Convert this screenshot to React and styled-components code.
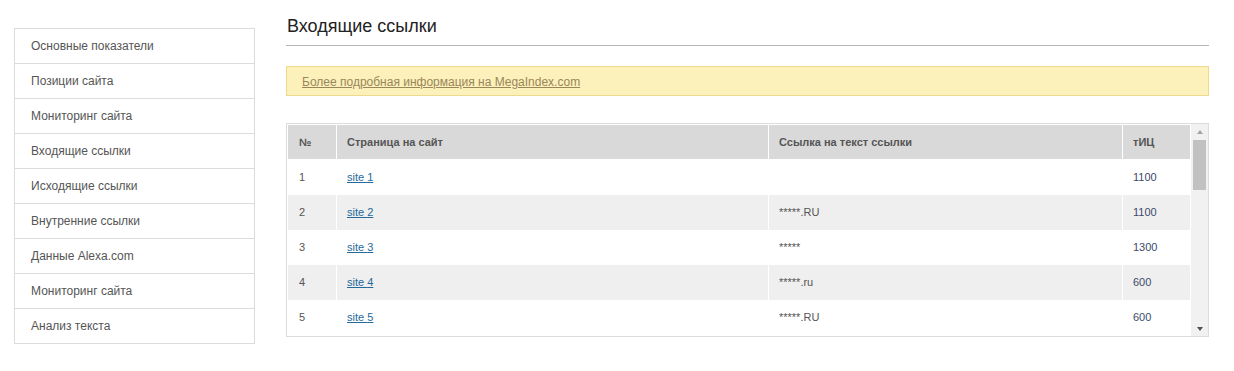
import React from 'react';
import styled, { createGlobalStyle } from 'styled-components';

const GlobalStyle = createGlobalStyle`
  body {
    margin: 0;
    background: #fff;
    font-family: "Liberation Sans", Arial, sans-serif;
  }
`;

const Page = styled.div`
  display: flex;
  align-items: flex-start;
  gap: 31px;
  padding-left: 14px;
`;

const Sidebar = styled.ul`
  list-style: none;
  margin: 28px 0 0;
  padding: 0;
  width: 239px;
  border: 1px solid #dcdcdc;
  border-bottom: none;
`;

const SideItem = styled.li`
  height: 34px;
  line-height: 34px;
  padding-left: 16px;
  border-bottom: 1px solid #dcdcdc;
  font-size: 12px;
  color: #555;
`;

const Main = styled.main`
  width: 923px;
`;

const Title = styled.h1`
  margin: 0;
  padding: 16px 0 9px 1px;
  line-height: 20px;
  font-size: 18px;
  font-weight: normal;
  color: #222;
  border-bottom: 1px solid #b4b6b8;
`;

const Notice = styled.div`
  margin-top: 20px;
  height: 28px;
  line-height: 28px;
  padding-left: 15px;
  background: #fcf0bb;
  border: 1px solid #efd98f;

  a {
    font-size: 12px;
    color: #9a8759;
    text-decoration: underline;
  }
`;

const TableBox = styled.div`
  margin-top: 27px;
  height: 212px;
  border: 1px solid #dcdcdc;
  display: flex;
`;

const Viewport = styled.div`
  flex: 1;
  padding: 1px;
  overflow: hidden;
`;

const Table = styled.table`
  width: 902px;
  border-collapse: collapse;
  font-size: 11px;
  color: #555;
`;

const Th = styled.th`
  height: 34px;
  padding: 0 10px;
  text-align: left;
  font-weight: bold;
  background: #d9d9d9;
  border-bottom: 1px solid #fff;
  border-left: 1px solid #fff;
  width: ${(p) => p.$w || 'auto'};
  &:first-child { border-left: none; padding-left: 11px; }
`;

const Tr = styled.tr`
  background: ${(p) => (p.$alt ? '#efefef' : '#fff')};
`;

const Td = styled.td`
  height: 34px;
  padding: 0 10px 1px;
  border-left: 1px solid #fff;
  color: ${(p) => p.$color || '#555'};
  &:first-child { border-left: none; padding-left: 11px; }

  a {
    color: #24699a;
    text-decoration: underline;
  }
`;

const Scrollbar = styled.div`
  width: 17px;
  margin-left: 1px;
  background: #f1f1f1;
  display: flex;
  flex-direction: column;
  align-items: center;
`;

const Arrow = styled.div`
  height: 15px;
  display: flex;
  align-items: center;
  justify-content: center;
  &::after {
    content: '';
    border-left: 3.5px solid transparent;
    border-right: 3.5px solid transparent;
    ${(p) => (p.$down ? 'border-top: 4px solid #505050;' : 'border-bottom: 4px solid #a3a3a3;')}
  }
`;

const Track = styled.div`
  flex: 1;
  width: 100%;
  display: flex;
  justify-content: center;
`;

const Thumb = styled.div`
  width: 13px;
  height: 50px;
  margin-top: 1px;
  background: #c1c1c1;
`;

const menu = [
  'Основные показатели',
  'Позиции сайта',
  'Мониторинг сайта',
  'Входящие ссылки',
  'Исходящие ссылки',
  'Внутренние ссылки',
  'Данные Alexa.com',
  'Мониторинг сайта',
  'Анализ текста',
];

const rows = [
  { text: '', tic: 1100 },
  { text: '*****.RU', tic: 1100 },
  { text: '*****', tic: 1300 },
  { text: '*****.ru', tic: 600 },
  { text: '*****.RU', tic: 600 },
];

const App = () => {
  return (
    <>
      <GlobalStyle />
      <Page>
        <Sidebar>
          {menu.map((item, i) => (
            <SideItem key={i}>{item}</SideItem>
          ))}
        </Sidebar>
        <Main>
          <Title>Входящие ссылки</Title>
          <Notice>
            <a href="#">Более подробная информация на MegaIndex.com</a>
          </Notice>
          <TableBox>
            <Viewport>
              <Table>
                <thead>
                  <tr>
                    <Th $w="27px">№</Th>
                    <Th $w="411px">Страница на сайт</Th>
                    <Th $w="333px">Ссылка на текст ссылки</Th>
                    <Th>тИЦ</Th>
                  </tr>
                </thead>
                <tbody>
                  {rows.map((r, i) => (
                    <Tr key={i} $alt={i % 2 === 1}>
                      <Td>{i + 1}</Td>
                      <Td><a href="#">site {i + 1}</a></Td>
                      <Td>{r.text}</Td>
                      <Td $color="#3c4a6a">{r.tic}</Td>
                    </Tr>
                  ))}
                </tbody>
              </Table>
            </Viewport>
            <Scrollbar>
              <Arrow />
              <Track>
                <Thumb />
              </Track>
              <Arrow $down />
            </Scrollbar>
          </TableBox>
        </Main>
      </Page>
    </>
  );
};

export default App;
